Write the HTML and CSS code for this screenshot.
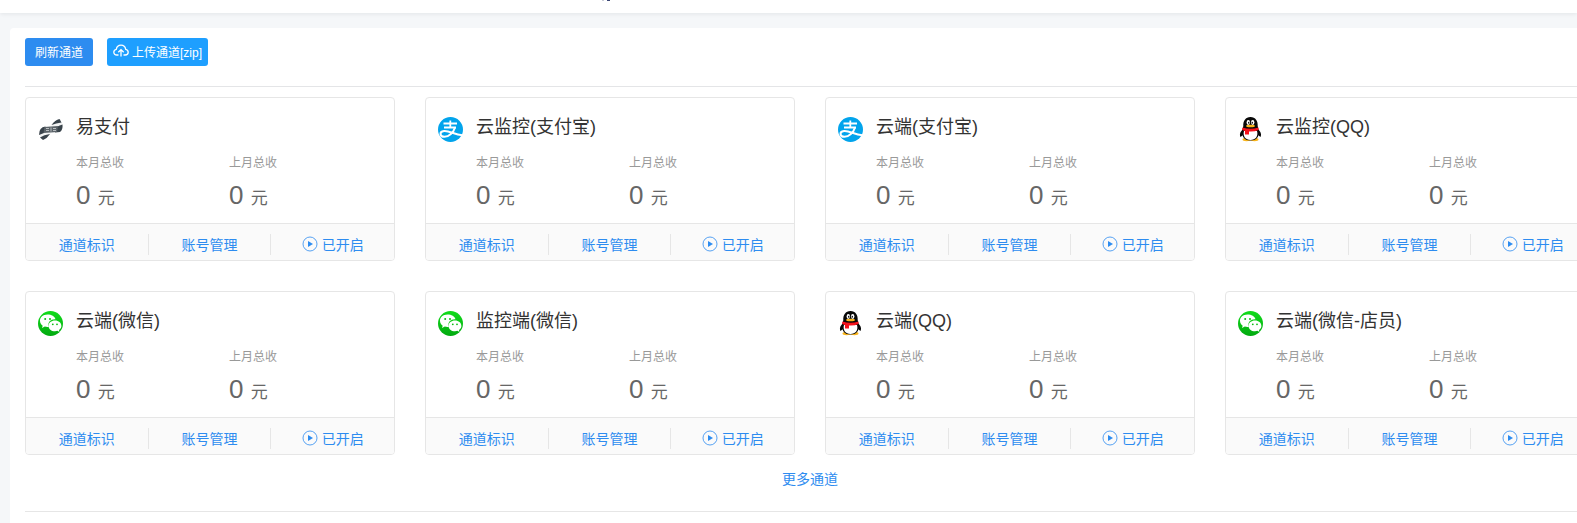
FILE: index.html
```html
<!DOCTYPE html>
<html lang="zh-CN">
<head>
  <meta charset="UTF-8">
  <meta name="viewport" content="width=device-width, initial-scale=1.0">
  <title>通道管理</title>
  <link rel="stylesheet" href="styles.css">
</head>
<body>
  <svg class="sprite" aria-hidden="true">
    <symbol id="icon-epay" viewBox="0 0 25 25">
      <path d="M1 15Q2 9.500 8 9.500L14 8.500Q17 3 22.500 2L24.500 8Q25 13 21 15L13 16Q10 21 6 23L2.500 20Z" fill="#f2f3f3"/>
      <path d="M1 18Q1 10 7.500 9.500L6 16Z M13.500 8Q17 3 21.500 2L23.500 5.500Q18 6 13.500 8Z M18.500 10Q22 8 24.500 7.500Q25 13 22 15L17 15.500Z M2 20.500Q6 17.500 12 17Q9.500 21 5 23Z" fill="#39434b"/>
      <path d="M6.500 10L20 9L19 15L5.500 16Z" fill="#5b6369"/>
      <path d="M8 11.500h3M8 13.500h3M13 10.500v4M15 11.500h3M15 13.500h3" stroke="#b9bdc0" stroke-width="1"/>
    </symbol>
    <symbol id="icon-alipay" viewBox="0 0 25 25">
      <circle cx="12.5" cy="12.5" r="12.5" fill="#02a4ec"/>
      <path d="M5.500 6.500h13.500M12.300 3.500v7M6 10.500h12" fill="none" stroke="#fff" stroke-width="1.800"/>
      <path d="M17 10.500c-1.500 5-6 9.300-10.500 9.300c-5 0-5.500-5.300-.5-5.800c5.500-.5 10 3.500 18.500 4.300" fill="none" stroke="#fff" stroke-width="2"/>
    </symbol>
    <symbol id="icon-qq" viewBox="0 0 25 25">
      <path d="M5.500 12C1.500 15 1.500 18 2.500 20L5 18zM19.500 12C23.500 15 23.500 18 22.500 20L20 18z" fill="#080808"/>
      <ellipse cx="8.5" cy="22.5" rx="4" ry="1.700" fill="#f9b51c"/>
      <ellipse cx="16.5" cy="22.5" rx="4" ry="1.700" fill="#f9b51c"/>
      <path d="M12.500 0C7.500 0 5 4 5.300 9L4 15C4 20 7 23.500 12.500 23.500S21 20 21 15L19.700 9C20 4 17.500 0 12.500 0z" fill="#080808"/>
      <path d="M6 14h13c1.500 5-1.500 9-6.500 9S4.500 19 6 14z" fill="#fff"/>
      <path d="M4.500 10.500Q12.500 13 20.500 10.500L20.500 13Q16 15 11 14.500V17.500H7V14Q5 13.500 4 12.500z" fill="#f5121b"/>
      <ellipse cx="10.3" cy="5.5" rx="1.700" ry="2.400" fill="#fff"/>
      <ellipse cx="14.7" cy="5.5" rx="1.700" ry="2.400" fill="#fff"/>
      <ellipse cx="10.7" cy="5.7" rx=".7" ry="1" fill="#080808"/>
      <ellipse cx="14.3" cy="5.7" rx=".7" ry="1" fill="#080808"/>
      <ellipse cx="12.5" cy="9" rx="4.500" ry="1.300" fill="#f9b51c"/>
    </symbol>
    <symbol id="icon-wechat" viewBox="0 0 25 25">
      <linearGradient id="wechat-green" x1="0" y1="0" x2="0" y2="1">
        <stop offset="0" stop-color="#12dc1b"/>
        <stop offset="1" stop-color="#02aa10"/>
      </linearGradient>
      <circle cx="12.5" cy="12.5" r="12.5" fill="url(#wechat-green)"/>
      <path d="M9.500 3.500C5 3.500 2 6.300 2 9.800c0 2 1 3.700 2.700 4.900L4 17l2.800-1.400c1.500.4 2.600.4 4 .3C9 11 13.500 7.800 17.500 8.300 16.800 5.500 13.500 3.500 9.500 3.500z" fill="#fff"/>
      <path d="M17 9.500c-3.700 0-6.500 2.400-6.500 5.400s2.800 5.300 6.500 5.300c.9 0 1.700-.1 2.400-.4l2.100 1.200-.6-2c1.500-1 2.500-2.400 2.500-4.100 0-3-2.700-5.400-6.400-5.400z" fill="#fff"/>
      <g fill="#09be14">
        <circle cx="7.2" cy="8" r="1"/><circle cx="12" cy="8" r="1"/>
        <circle cx="14.8" cy="13.3" r=".9"/><circle cx="19" cy="13.3" r=".9"/>
      </g>
    </symbol>
    <symbol id="icon-play" viewBox="0 0 16 16">
      <circle cx="8" cy="8" r="7" fill="none" stroke="currentColor" stroke-width=".8"/>
      <path d="M6 5L11 8L6 11z" fill="currentColor"/>
    </symbol>
    <symbol id="icon-upload" viewBox="0 0 16 14">
      <path d="M5.500 11H3.800C2 11 .8 9.800.8 8.200c0-1.500 1-2.600 2.500-2.900C3.700 3 5.500 1.200 8 1.200s4.300 1.800 4.700 4.100c1.500.3 2.500 1.400 2.500 2.900 0 1.600-1.200 2.800-3 2.800h-1.700M8 12.500V6M5.300 8.300L8 5.600l2.700 2.700" fill="none" stroke="currentColor" stroke-width="1.300"/>
    </symbol>
  </svg>

  <header class="header">
    <svg class="header-mark" width="8" height="2" aria-hidden="true">
      <path d="M0 0h2v1H0z" fill="#c9ccd8"/>
      <path d="M5 0h3v1H5z" fill="#3c4775"/>
    </svg>
  </header>

  <main class="panel">
    <div class="toolbar">
      <button class="btn" type="button">刷新通道</button>
      <button class="btn btn-upload" type="button"><svg width="16" height="14" aria-hidden="true"><use href="#icon-upload"/></svg>上传通道[zip]</button>
    </div>
    <div class="channels" id="channels"></div>
    <div class="more"><a href="#">更多通道</a></div>
  </main>

  <script>
    const channels = [
      { name: "易支付", icon: "epay" },
      { name: "云监控(支付宝)", icon: "alipay" },
      { name: "云端(支付宝)", icon: "alipay" },
      { name: "云监控(QQ)", icon: "qq" },
      { name: "云端(微信)", icon: "wechat" },
      { name: "监控端(微信)", icon: "wechat" },
      { name: "云端(QQ)", icon: "qq" },
      { name: "云端(微信-店员)", icon: "wechat" }
    ];

    document.getElementById("channels").innerHTML = channels.map(item => `
      <section class="card">
        <div class="card-body">
          <svg class="card-icon" aria-hidden="true"><use href="#icon-${item.icon}"/></svg>
          <div class="card-info">
            <h2 class="card-title">${item.name}</h2>
            <div class="totals">
              <div>
                <div class="label">本月总收</div>
                <div class="amount">0 <small>元</small></div>
              </div>
              <div>
                <div class="label">上月总收</div>
                <div class="amount">0 <small>元</small></div>
              </div>
            </div>
          </div>
        </div>
        <div class="card-actions">
          <a href="#">通道标识</a>
          <a href="#">账号管理</a>
          <a href="#"><svg width="16" height="16" aria-hidden="true"><use href="#icon-play"/></svg>已开启</a>
        </div>
      </section>`).join("");
  </script>
</body>
</html>
```

FILE: styles.css
```css
* {
  box-sizing: border-box;
}

body {
  margin: 0;
  overflow: hidden;
  background-color: #f5f7f9;
  color: #333;
  font-family: "Liberation Sans", "Noto Sans CJK SC", sans-serif;
  font-size: 14px;
}

a {
  color: #2d8cf0;
  text-decoration: none;
}

.sprite {
  position: absolute;
  width: 0;
  height: 0;
}

.header {
  height: 13px;
  padding-left: 602px;
  background-color: #fff;
  box-shadow: 0 1px 4px rgba(0, 21, 41, 0.08);
}

.header-mark {
  display: block;
}

.panel {
  min-width: max-content;
  margin: 15px 10px 0;
  padding: 10px 15px 20px;
  background-color: #fff;
  border-radius: 4px;
}

.toolbar {
  display: flex;
  gap: 14px;
  padding-bottom: 20px;
  border-bottom: 1px solid #e4e5e7;
}

.btn {
  display: flex;
  align-items: center;
  height: 28px;
  padding: 0 10px 2px;
  border: 0;
  border-radius: 3px;
  background-color: #2d8cf0;
  color: #fff;
  font-family: inherit;
  font-size: 12px;
  cursor: pointer;
}

.btn-upload {
  gap: 3px;
  padding: 0 6px 2px;
  background-color: #1e9fff;
}

/* channel cards */
.channels {
  display: grid;
  grid-template-columns: repeat(4, minmax(370px, 1fr));
  gap: 30px;
  padding-top: 10px;
}

.card {
  overflow: hidden;
  border: 1px solid #e6e6e6;
  border-radius: 4px;
}

.card-body {
  display: flex;
  gap: 13px;
  padding: 19px 12px 9px;
}

.card-icon {
  flex: none;
  width: 25px;
  height: 25px;
}

.card-info {
  flex: 1;
}

.card-title {
  margin: 0;
  font-size: 18px;
  font-weight: 400;
  line-height: 20px;
}

.totals {
  display: grid;
  grid-template-columns: 1fr 1fr;
  padding-top: 16px;
}

.label {
  color: #999;
  font-size: 12px;
  line-height: 20px;
}

.amount {
  padding-top: 7px;
  color: #666;
  font-size: 26px;
  line-height: 30px;
}

.amount small {
  font-size: 17px;
}

.card-actions {
  display: grid;
  grid-template-columns: repeat(3, 1fr);
  padding: 10px 0 5px;
  border-top: 1px solid #e6e6e6;
  background-color: #fafafa;
}

.card-actions a {
  display: flex;
  align-items: center;
  justify-content: center;
  gap: 4px;
  height: 21px;
  padding-bottom: 2px;
  border-right: 1px solid #e6e6e6;
}

.card-actions a:last-child {
  border-right: 0;
}

.more {
  padding: 14px 0 21px;
  border-bottom: 1px solid #e6e6e6;
  line-height: 21px;
  text-align: center;
}
```
